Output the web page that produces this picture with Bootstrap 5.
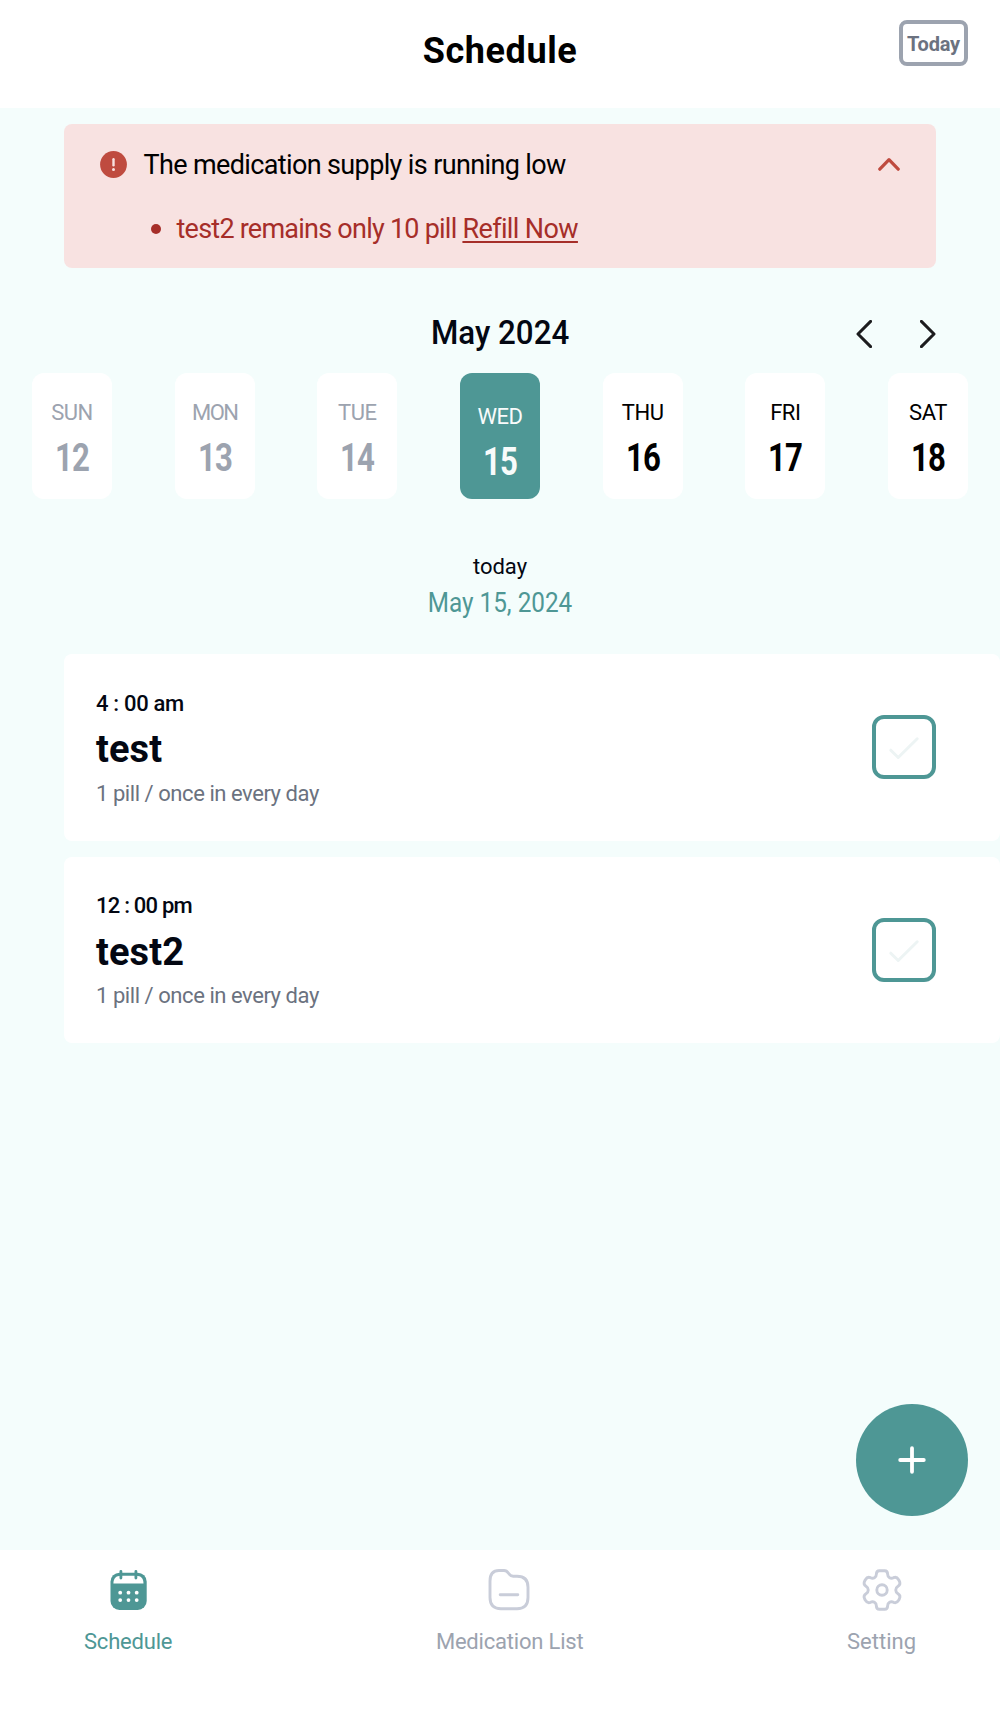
<!DOCTYPE html>
<html lang="en">
<head>
<meta charset="utf-8">
<meta name="viewport" content="width=device-width, initial-scale=1">
<title>Schedule</title>
<link href="https://cdn.jsdelivr.net/npm/bootstrap@5.3.0/dist/css/bootstrap.min.css" rel="stylesheet">
<style>
  :root { --teal: #4e9795; --ink: #030712; --muted: #9ca3af; --slate: #6b7280; --mint: #f4fdfc; }
  body { font-family: Roboto, "Liberation Sans", sans-serif; color: #000; background: #fff; }
  svg { display: block; fill: none; stroke: currentColor; stroke-linecap: round; stroke-linejoin: round; }
  a { color: inherit; }
  .app { height: 1716px; }
  .three-part { display: grid; grid-template-columns: 1fr auto 1fr; }
  .top-bar { height: 108px; padding: 20px 32px 0; }
  .page-title { font-size: 36px; font-weight: 700; line-height: 40px; letter-spacing: .6px; margin: 11px 0 0; }
  .today-btn { width: 69px; height: 46px; border: 4px solid var(--muted); border-radius: 8px; background: #fff; color: var(--slate); font-size: 20px; font-weight: 700; letter-spacing: -.2px; line-height: 40px; padding: 0; }
  .content { background: var(--mint); padding-top: 16px; }
  .supply { margin: 0 64px; height: 144px; padding: 24px 36px 0 35.5px; background: #f8e2e1; border-radius: 8px; font-size: 27px; line-height: 32px; }
  .supply-title { letter-spacing: -.63px; margin-left: 17px; padding-top: 1px; margin-bottom: -1px; }
  .supply-item { color: #a62e29; letter-spacing: -.76px; margin: 33px 0 0 51.5px; gap: 16.5px; }
  .supply-item a { letter-spacing: -.62px; text-decoration-thickness: 2px; text-underline-offset: 2.5px; text-decoration-skip-ink: none; }
  .bullet-dot { width: 10px; height: 10px; border-radius: 50%; background: #a62e29; margin-right: -1px; }
  .warn { color: #bf4b3f; }
  .month-row { margin-top: 44px; height: 40px; padding: 0 64px; color: var(--ink); }
  .month-name { font-size: 34px; font-weight: 500; line-height: 40px; transform: scaleX(.92); margin: 0; }
  .arrows { gap: 48px; color: #1c1c1e; padding-top: 4px; }
  .week { padding: 0 32px; margin-top: 21px; }
  .day { width: 80px; height: 126px; background: #fff; border-radius: 12px; padding-top: 25.5px; text-align: center; }
  .day .dow { font-size: 22px; line-height: 28px; letter-spacing: -.5px; }
  .day .num { font-size: 38px; font-weight: 700; line-height: 40px; margin-top: 11px; transform: scaleX(.82); letter-spacing: -1px; }
  .day.past { color: var(--muted); }
  .day.active { background: var(--teal); color: #f8fbfb; padding-top: 29.5px; }
  .today-word { font-size: 22px; line-height: 28px; color: var(--ink); margin-top: 54px; }
  .today-date { font-size: 27px; line-height: 32px; color: var(--teal); margin-top: 6px; transform: scaleX(.9); }
  .doses { margin: 35px 0 0 64px; gap: 16px; }
  .dose { height: 187px; background: #fff; border-radius: 8px; padding: 0 64px 0 32px; color: var(--ink); }
  .dose + .dose { height: 186px; }
  .dose-text { padding-top: 2px; }
  .dose-time { font-size: 22px; font-weight: 500; line-height: 28px; letter-spacing: -.31px; }
  .dose + .dose .dose-time { letter-spacing: -.78px; }
  .dose-name { font-size: 38px; font-weight: 700; line-height: 40px; margin: 11.5px 0 10.5px; letter-spacing: .12px; }
  .dose-info { font-size: 22px; line-height: 28px; color: var(--slate); letter-spacing: -.44px; }
  .tick-box { width: 64px; height: 64px; border: 4px solid var(--teal); border-radius: 12px; background: #fff; color: #edf4f4; padding: 0; margin-bottom: 1px; }
  .dose + .dose .tick-box { margin-bottom: 0; }
  .fab { right: 32px; bottom: 34px; width: 112px; height: 112px; border-radius: 50%; background: var(--teal); color: #fff; border: 0; }
  .tabs { height: 166px; padding: 16px 84px 0; color: var(--muted); font-size: 22px; line-height: 28px; }
  .tabs a { text-decoration: none; }
  .tabs svg { color: #c9cdd9; margin-bottom: 14px; }
  .tabs .on, .tabs .on svg { color: var(--teal); }
  .ls-tight { letter-spacing: -.2px; }
</style>
<script src="https://cdn.jsdelivr.net/npm/bootstrap@5.3.0/dist/js/bootstrap.bundle.min.js"></script>
</head>
<body>
<div class="app d-flex flex-column overflow-hidden">
  <header class="top-bar three-part">
    <span></span>
    <h1 class="page-title">Schedule</h1>
    <button class="today-btn ms-auto" type="button">Today</button>
  </header>

  <main class="content flex-grow-1 position-relative">
    <section class="supply">
      <div class="d-flex align-items-center">
        <svg width="27" height="27" viewBox="0 0 27 27" class="warn"><circle cx="13.5" cy="13.5" r="13.4" fill="currentColor" stroke="none"/><path d="M13.5 8.3v6" stroke="#f8e2e1" stroke-width="2.4"/><circle cx="13.5" cy="18.6" r="1.5" fill="#f8e2e1" stroke="none"/></svg>
        <span class="supply-title">The medication supply is running low</span>
        <svg width="22" height="14" viewBox="0 0 22 14" class="warn ms-auto"><path d="M1.8 12.2 11 2.6l9.2 9.6" stroke-width="3.2"/></svg>
      </div>
      <div class="supply-item d-flex align-items-center">
        <span class="bullet-dot"></span>
        <span>test2 remains only 10 pill <a href="#">Refill Now</a></span>
      </div>
    </section>

    <div class="month-row three-part">
      <span></span>
      <h2 class="month-name">May 2024</h2>
      <div class="arrows d-flex justify-content-end align-items-center">
        <svg width="16" height="28" viewBox="0 0 16 28"><path d="M14.6 1.4 2 14l12.6 12.6" stroke-width="3"/></svg>
        <svg width="16" height="28" viewBox="0 0 16 28"><path d="M1.4 1.4 14 14 1.4 26.6" stroke-width="3"/></svg>
      </div>
    </div>

    <div class="week d-flex justify-content-between">
      <div class="day past"><div class="dow">SUN</div><div class="num">12</div></div>
      <div class="day past"><div class="dow" style="letter-spacing:-1.6px">MON</div><div class="num">13</div></div>
      <div class="day past"><div class="dow">TUE</div><div class="num">14</div></div>
      <div class="day active"><div class="dow">WED</div><div class="num">15</div></div>
      <div class="day"><div class="dow">THU</div><div class="num">16</div></div>
      <div class="day"><div class="dow">FRI</div><div class="num">17</div></div>
      <div class="day"><div class="dow">SAT</div><div class="num">18</div></div>
    </div>

    <div class="text-center">
      <div class="today-word">today</div>
      <div class="today-date">May 15, 2024</div>
    </div>

    <div class="doses d-flex flex-column">
      <article class="dose d-flex align-items-center justify-content-between">
        <div class="dose-text">
          <div class="dose-time">4 : 00 am</div>
          <div class="dose-name">test</div>
          <div class="dose-info">1 pill / once in every day</div>
        </div>
        <button class="tick-box" type="button" aria-label="Mark test as taken"><svg width="56" height="56" viewBox="0 0 56 56"><path d="m14.8 31.2 7.400 7.300 19-18.700" stroke-width="3"/></svg></button>
      </article>
      <article class="dose d-flex align-items-center justify-content-between">
        <div class="dose-text">
          <div class="dose-time">12 : 00 pm</div>
          <div class="dose-name">test2</div>
          <div class="dose-info">1 pill / once in every day</div>
        </div>
        <button class="tick-box" type="button" aria-label="Mark test2 as taken"><svg width="56" height="56" viewBox="0 0 56 56"><path d="m14.8 31.2 7.400 7.300 19-18.700" stroke-width="3"/></svg></button>
      </article>
    </div>

    <button class="fab position-absolute d-flex align-items-center justify-content-center p-0" type="button" aria-label="Add">
      <svg width="28" height="28" viewBox="0 0 28 28"><path d="M14 2.200v23.600M2.200 14h23.600" stroke-width="3.800"/></svg>
    </button>
  </main>

  <nav class="tabs d-flex justify-content-between align-items-start">
    <a href="#" class="on ls-tight d-flex flex-column align-items-center">
      <svg width="48" height="48" viewBox="0 0 48 48"><rect x="6.5" y="6.7" width="36.2" height="37.3" rx="9" fill="currentColor" stroke="none"/><path d="M9.400 17.600C9.400 12.500 12 9.800 17 9.800h15c5 0 7.500 2.700 7.500 7.800z" fill="#fff" stroke="none"/><path d="M16.900 5.300v6.700M31.900 5.300v6.700" stroke-width="2.800"/><g fill="#fff" stroke="none"><circle cx="16.2" cy="26.7" r="1.9"/><circle cx="24.5" cy="26.7" r="1.9"/><circle cx="32.7" cy="26.7" r="1.9"/><circle cx="16.2" cy="34.1" r="1.9"/><circle cx="24.5" cy="34.1" r="1.9"/><circle cx="32.7" cy="34.1" r="1.9"/></g></svg>
      <span>Schedule</span>
    </a>
    <a href="#" class="ls-tight d-flex flex-column align-items-center">
      <svg width="48" height="48" viewBox="0 0 48 48"><path d="M13 4.500h5c2.500 0 3.300 1 4.500 2.800 1.300 2 2 3 4.700 3H31c7.500 0 11 4 11 11v10.200c0 7.500-4 11.200-11 11.200H15c-7.500 0-11-4-11-11.200V15C4 8 7 4.500 13 4.500z" stroke-width="2.900"/><path d="M14.200 28.700h17.600" stroke-width="2.900"/></svg>
      <span>Medication List</span>
    </a>
    <a href="#" class="d-flex flex-column align-items-center">
      <svg width="48" height="48" viewBox="-24 -24 48 48"><path d="M-2.600-19.300H2.600C4.900-19.300 5.600-17.800 5.600-16 5.600-12.500 8.800-11 11.500-12.300 13.800-13.200 15.500-12.200 16.600-10.300L17.200-9.200C18.500-6.800 18-5 16-3.800 13-2 13 2 16 3.800 18 5 18.500 6.800 17.200 9.200L16.600 10.300C15.500 12.200 13.800 13.200 11.500 12.300 8.800 11 5.600 12.500 5.600 16 5.600 17.800 4.900 19.300 2.600 19.300H-2.600C-4.900 19.300-5.600 17.800-5.600 16-5.600 12.500-8.800 11-11.500 12.300-13.800 13.200-15.500 12.200-16.600 10.300L-17.200 9.200C-18.500 6.800-18 5-16 3.800-13 2-13-2-16-3.800-18-5-18.500-6.800-17.200-9.200L-16.600-10.300C-15.500-12.200-13.800-13.200-11.500-12.300-8.800-11-5.600-12.500-5.600-16-5.600-17.800-4.900-19.300-2.600-19.300z" stroke-width="2.900"/><circle r="5.200" stroke-width="2.900"/></svg>
      <span>Setting</span>
    </a>
  </nav>
</div>
</body>
</html>
